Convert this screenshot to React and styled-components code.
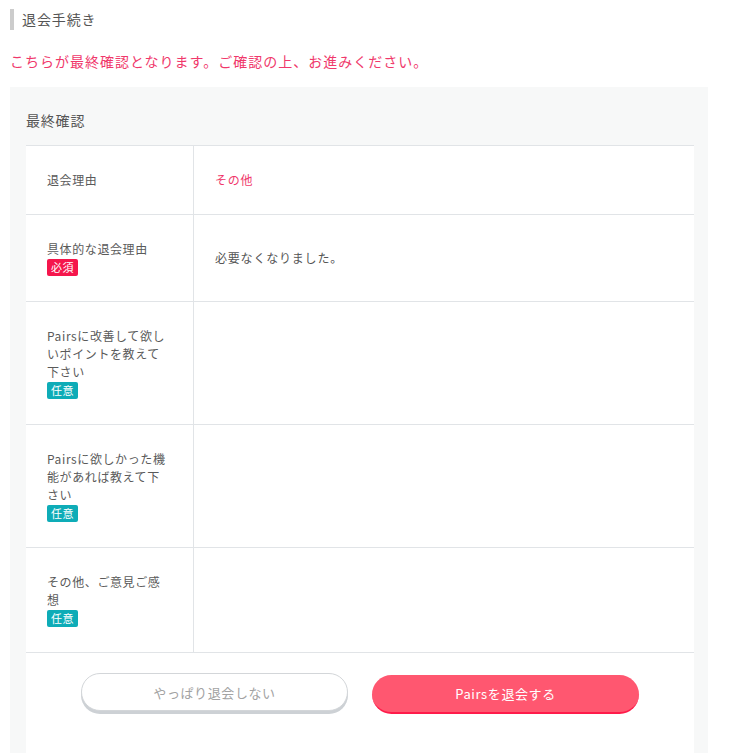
import React from 'react';
import styled, { createGlobalStyle } from 'styled-components';

const GlobalStyle = createGlobalStyle`
    body {
        margin: 0;
        background: #fff;
        font-family: 'Noto Sans CJK JP', 'Noto Sans', sans-serif;
        color: #555;
    }
`;

const Page = styled.div`
    padding: 9px 0 0 10px;
`;

const Heading = styled.h1`
    margin: 0;
    border-left: 4px solid #ccc;
    padding-left: 8px;
    font-size: 14px;
    font-weight: normal;
    line-height: 21px;
    letter-spacing: 0.9px;
    color: #555;
`;

const Notice = styled.p`
    margin: 21px 0 16px;
    font-size: 14px;
    line-height: 20px;
    letter-spacing: 1px;
    color: #f0386b;
`;

const Panel = styled.section`
    background: #f7f8f8;
    margin-right: 22px;
    padding: 23px 14px 0 16px;
`;

const PanelTitle = styled.h2`
    margin: 0 0 15px;
    font-size: 14px;
    font-weight: normal;
    line-height: 20px;
    letter-spacing: 0.8px;
    color: #555;
`;

const Card = styled.div`
    background: #fff;
`;

const Row = styled.div`
    display: grid;
    grid-template-columns: 168px 1fr;
    border-top: 1px solid #e1e4e7;
`;

const Label = styled.div`
    display: flex;
    flex-direction: column;
    justify-content: center;
    align-items: flex-start;
    padding: 25px 12px 25px 21px;
    border-right: 1px solid #e1e4e7;
    font-size: 12px;
    line-height: 18px;
    letter-spacing: 0.6px;
    color: #5a5a5a;
`;

const Value = styled.div`
    display: flex;
    align-items: center;
    padding: 0 20px 0 21px;
    font-size: 12px;
    line-height: 18px;
    letter-spacing: 0.8px;
    color: ${p => (p.$accent ? '#f0386b' : '#555')};
`;

const Badge = styled.span`
    display: inline-block;
    margin-top: 1px;
    padding: 0 4px;
    border-radius: 2px;
    font-size: 11px;
    line-height: 17px;
    letter-spacing: 0.5px;
    color: #fff;
    background: ${p => (p.$required ? '#f5164c' : '#0eacb7')};
`;

const Actions = styled.div`
    display: flex;
    justify-content: center;
    align-items: flex-start;
    gap: 24px;
    padding: 20px 0 70px;
    border-top: 1px solid #e1e4e7;
`;

const Button = styled.button`
    box-sizing: border-box;
    width: 267px;
    border-radius: 20px;
    font-family: inherit;
    font-size: 13px;
    letter-spacing: 0.6px;
    cursor: pointer;
`;

const CancelButton = styled(Button)`
    height: 38px;
    border: 1px solid #d3d6d9;
    background: #fff;
    color: #a3a3a3;
    box-shadow: 0 3px 0 #cdd1d5;
`;

const LeaveButton = styled(Button)`
    height: 39px;
    margin-top: 2px;
    border: none;
    border-bottom: 2px solid #ff1b4a;
    background: #ff5770;
    color: #fff;
`;

const rows = [
    { label: ['退会理由'], value: 'その他', accent: true },
    { label: ['具体的な退会理由'], badge: 'required', value: '必要なくなりました。' },
    { label: ['Pairsに改善して欲し', 'いポイントを教えて', '下さい'], badge: 'optional' },
    { label: ['Pairsに欲しかった機', '能があれば教えて下', 'さい'], badge: 'optional' },
    { label: ['その他、ご意見ご感', '想'], badge: 'optional' },
];

const App = () => (
    <Page>
        <GlobalStyle />
        <Heading>退会手続き</Heading>
        <Notice>こちらが最終確認となります。ご確認の上、お進みください。</Notice>
        <Panel>
            <PanelTitle>最終確認</PanelTitle>
            <Card>
                {rows.map((row, i) => (
                    <Row key={i}>
                        <Label>
                            {row.label.map(line => (
                                <span key={line}>{line}</span>
                            ))}
                            {row.badge && (
                                <Badge $required={row.badge === 'required'}>
                                    {row.badge === 'required' ? '必須' : '任意'}
                                </Badge>
                            )}
                        </Label>
                        <Value $accent={row.accent}>{row.value}</Value>
                    </Row>
                ))}
                <Actions>
                    <CancelButton>やっぱり退会しない</CancelButton>
                    <LeaveButton>Pairsを退会する</LeaveButton>
                </Actions>
            </Card>
        </Panel>
    </Page>
);

export default App;
